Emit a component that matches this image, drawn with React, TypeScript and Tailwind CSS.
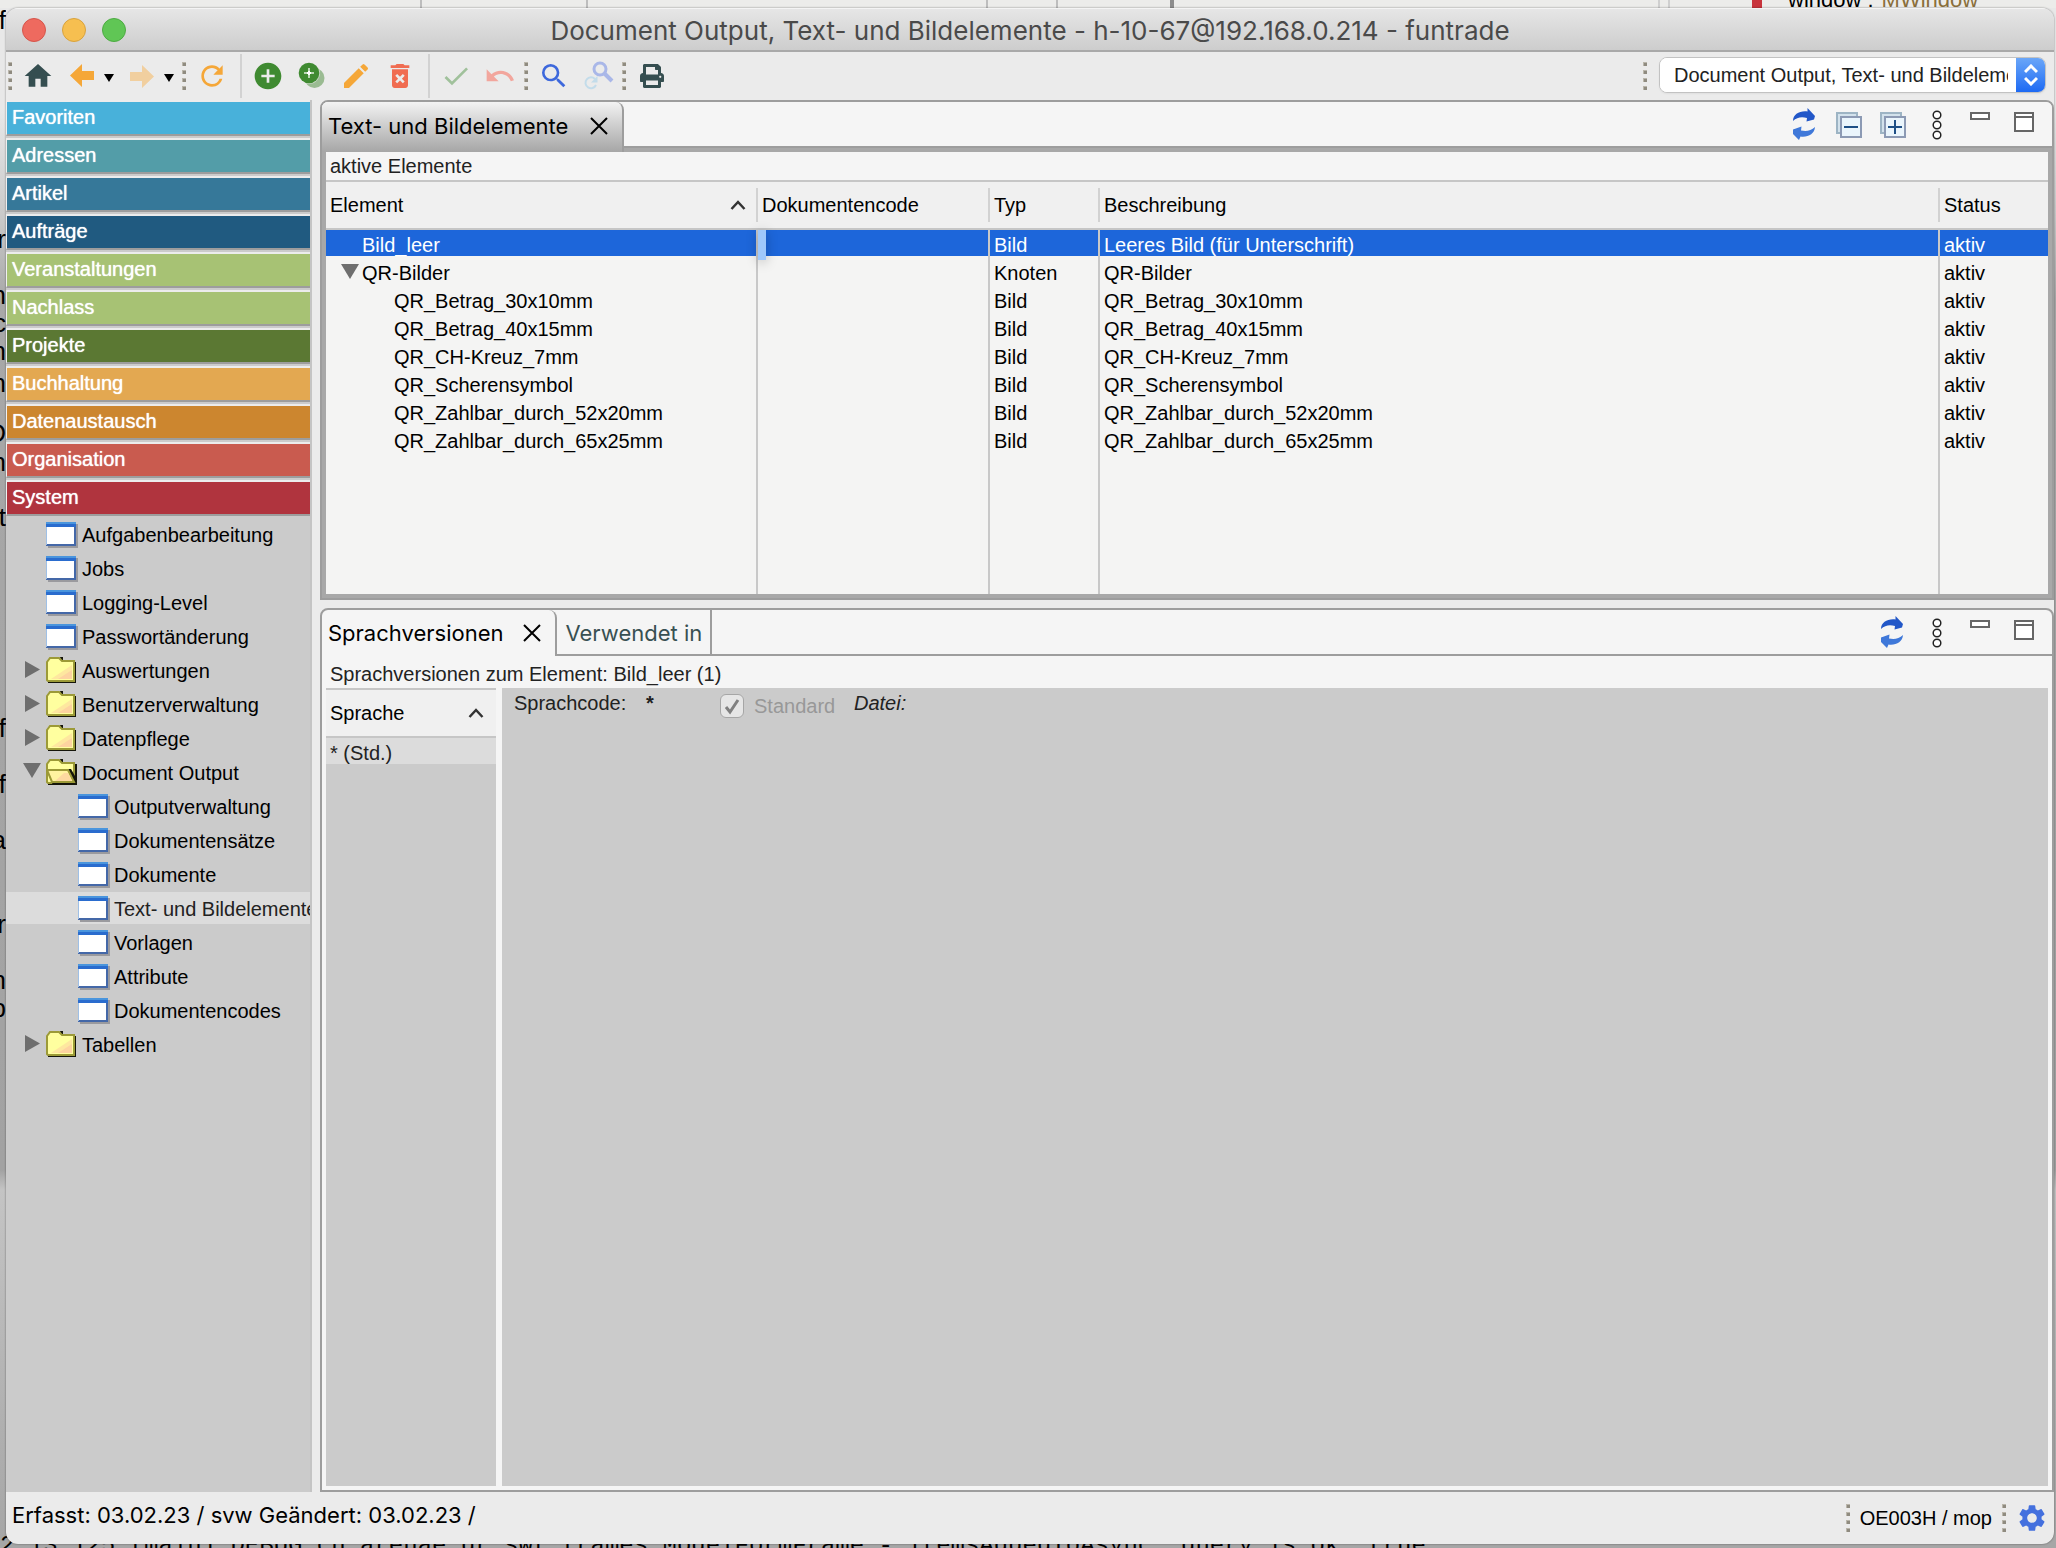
import React from 'react';
import {
  MdAddCircle,
  MdCheck,
  MdDeleteForever,
  MdEdit,
  MdHome,
  MdRefresh,
  MdSearch,
  MdSettings,
  MdUndo,
} from 'react-icons/md';
import { FaPrint } from 'react-icons/fa';

const navSections = [
  { label: 'Favoriten', color: 'bg-[#48b1da]' },
  { label: 'Adressen', color: 'bg-[#539da8]' },
  { label: 'Artikel', color: 'bg-[#367899]' },
  { label: 'Aufträge', color: 'bg-[#205a80]' },
  { label: 'Veranstaltungen', color: 'bg-[#a7c274]' },
  { label: 'Nachlass', color: 'bg-[#a7c274]' },
  { label: 'Projekte', color: 'bg-[#5b7833]' },
  { label: 'Buchhaltung', color: 'bg-[#e3a851]' },
  { label: 'Datenaustausch', color: 'bg-[#cc862f]' },
  { label: 'Organisation', color: 'bg-[#c95b4f]' },
  { label: 'System', color: 'bg-[#b0343e]' },
];

type TreeItem = {
  label: string;
  kind: 'window' | 'folder' | 'open';
  child?: boolean;
  selected?: boolean;
};

const treeItems: TreeItem[] = [
  { label: 'Aufgabenbearbeitung', kind: 'window' },
  { label: 'Jobs', kind: 'window' },
  { label: 'Logging-Level', kind: 'window' },
  { label: 'Passwortänderung', kind: 'window' },
  { label: 'Auswertungen', kind: 'folder' },
  { label: 'Benutzerverwaltung', kind: 'folder' },
  { label: 'Datenpflege', kind: 'folder' },
  { label: 'Document Output', kind: 'open' },
  { label: 'Outputverwaltung', kind: 'window', child: true },
  { label: 'Dokumentensätze', kind: 'window', child: true },
  { label: 'Dokumente', kind: 'window', child: true },
  { label: 'Text- und Bildelemente', kind: 'window', child: true, selected: true },
  { label: 'Vorlagen', kind: 'window', child: true },
  { label: 'Attribute', kind: 'window', child: true },
  { label: 'Dokumentencodes', kind: 'window', child: true },
  { label: 'Tabellen', kind: 'folder' },
];

const elements = [
  { name: 'Bild_leer', level: 0, type: 'Bild', text: 'Leeres Bild (für Unterschrift)' },
  { name: 'QR-Bilder', level: 0, type: 'Knoten', text: 'QR-Bilder', open: true },
  { name: 'QR_Betrag_30x10mm', level: 1, type: 'Bild', text: 'QR_Betrag_30x10mm' },
  { name: 'QR_Betrag_40x15mm', level: 1, type: 'Bild', text: 'QR_Betrag_40x15mm' },
  { name: 'QR_CH-Kreuz_7mm', level: 1, type: 'Bild', text: 'QR_CH-Kreuz_7mm' },
  { name: 'QR_Scherensymbol', level: 1, type: 'Bild', text: 'QR_Scherensymbol' },
  { name: 'QR_Zahlbar_durch_52x20mm', level: 1, type: 'Bild', text: 'QR_Zahlbar_durch_52x20mm' },
  { name: 'QR_Zahlbar_durch_65x25mm', level: 1, type: 'Bild', text: 'QR_Zahlbar_durch_65x25mm' },
];

// Bits of the windows behind this one that peek out at the left edge
const backdropBits = [
  { top: 6, text: 'f' },
  { top: 225, text: 'r' },
  { top: 281, text: 'n' },
  { top: 309, text: 'c' },
  { top: 337, text: 'n' },
  { top: 369, text: 'n' },
  { top: 419, text: 'D' },
  { top: 448, text: 'n' },
  { top: 503, text: 't' },
  { top: 714, text: 'f' },
  { top: 770, text: 'f' },
  { top: 826, text: 'a' },
  { top: 910, text: 'r' },
  { top: 966, text: 'n' },
  { top: 994, text: 'b' },
];

const Grip = () => (
  <svg width="4" height="28" className="shrink-0" aria-hidden="true">
    {[0, 8, 16, 24].map((y) => (
      <g key={y}>
        <rect y={y} width="4" height="4" fill="#b9b5aa" />
        <rect x="1" y={y + 1} width="3" height="3" fill="#8f8b80" />
      </g>
    ))}
  </svg>
);

const Divider = () => <div className="w-[2px] h-11 bg-[#d2d2d2] shrink-0"></div>;

const ToolButton = ({ label, children }: { label: string; children: React.ReactNode }) => (
  <button type="button" aria-label={label} className="w-8 h-8 shrink-0 flex items-center justify-center">
    {children}
  </button>
);

const Arrow = ({ label, color, flip = false }: { label: string; color: string; flip?: boolean }) => (
  <button type="button" aria-label={label} className="shrink-0">
    <svg width="24" height="24" viewBox="0 0 24 24" className={flip ? 'rotate-180' : ''}>
      <path d="M0 11.500L12 0V7H24V16H12V23Z" fill={color} />
    </svg>
  </button>
);

const Caret = ({ label }: { label: string }) => (
  <button type="button" aria-label={label} className="shrink-0">
    <svg width="10" height="8" viewBox="0 0 10 8" className="mt-[3px]">
      <path d="M0 0H10L5 8Z" fill="#000" />
    </svg>
  </button>
);

const AddCopyIcon = () => (
  <svg width="32" height="32" viewBox="0 0 32 32">
    <circle cx="18.500" cy="18" r="10" fill="#9abb92" />
    <circle cx="13" cy="13" r="11" fill="#ebebeb" opacity="0.600" />
    <circle cx="13" cy="13" r="10.300" fill="#3f8a31" />
    <path d="M13 8V18M8 13H18" stroke="#b9d6b4" strokeWidth="2" />
    <path d="M13 11V15M11 13H15" stroke="#fff" strokeWidth="2" />
  </svg>
);

const SearchResetIcon = () => (
  <svg width="32" height="32" viewBox="0 0 32 32" fill="none">
    <circle cx="18" cy="9" r="6" stroke="#a9b7e8" strokeWidth="3" />
    <path d="M22 13L30 21" stroke="#a9b7e8" strokeWidth="4" />
    <path d="M13 19A5.500 5.500 0 1 0 14 25" stroke="#c3dcea" strokeWidth="2" />
    <path d="M15.500 16V22.500H9Z" fill="#c3dcea" />
  </svg>
);

const SyncIcon = () => (
  <svg width="24" height="32" viewBox="0 0 24 32">
    <path d="M1 13C1 6 8 2.500 15.500 3.500V0L23 8L22 11.500L14.500 13.500L15 10C10 8.500 5 9 1 13Z" fill="#2257c8" />
    <path d="M23 19C22.500 26 16 29.500 8.500 28.500L7 32L1 26L1 21.500L9.500 18.500L9 22.500C14 23.500 19 23 23 19Z" fill="#3f78d9" />
  </svg>
);

const StackIcon = ({ plus = false }: { plus?: boolean }) => (
  <svg width="26" height="26" viewBox="0 0 26 26">
    <rect x="1" y="1" width="20" height="20" fill="#d3e2ec" stroke="#9db4c4" strokeWidth="2" />
    <rect x="5" y="5" width="20" height="20" fill="#eaf5fc" stroke="#8c9ab4" strokeWidth="2" />
    <path d="M8 15H22" stroke="#1d4f86" strokeWidth="2" />
    {plus && <path d="M15 8V22" stroke="#1d4f86" strokeWidth="2" />}
  </svg>
);

const DotsIcon = () => (
  <svg width="10" height="30" viewBox="0 0 10 30" fill="#fff" stroke="#222" strokeWidth="1.500">
    <circle cx="5" cy="5" r="3.800" />
    <circle cx="5" cy="15" r="3.800" />
    <circle cx="5" cy="25" r="3.800" />
  </svg>
);

const CloseIcon = () => (
  <svg width="18" height="18" viewBox="0 0 18 18" stroke="#000" strokeWidth="2">
    <path d="M1 1L17 17M17 1L1 17" />
  </svg>
);

const SortIcon = () => (
  <svg width="16" height="10" viewBox="0 0 16 10" fill="none" stroke="#333" strokeWidth="2.500">
    <path d="M1.500 9L8 2L14.500 9" />
  </svg>
);

const WindowIcon = () => (
  <svg width="32" height="26" viewBox="0 0 32 26" className="shrink-0 mt-[2px]">
    <rect x="2" y="2" width="30" height="24" fill="#9a9a9e" />
    <rect width="30" height="24" fill="#4468a8" />
    <rect width="30" height="2" fill="#4a95dd" />
    <rect y="2" width="30" height="3" fill="#2a6cce" />
    <rect y="5" width="1" height="18" fill="#9fc0e6" />
    <rect x="1" y="5" width="27" height="17" fill="#fff" />
  </svg>
);

const FolderIcon = ({ open = false }: { open?: boolean }) => (
  <svg width="32" height="26" viewBox="0 0 32 26" className="shrink-0">
    <path d="M2 26V24H28V5H30V26ZM14 0H17V3H15Z" fill="#15150a" />
    <path d="M1 23V5L4 1H13L16 4H28V24H2Z" fill="#ffff9f" stroke="#9c9a37" strokeWidth="2" />
    {open ? (
      <>
        <path d="M22 10L25 10L29 17V5H31V26H7L6 24H28Z" fill="#15150a" />
        <path d="M1 11H22L28 23H6Z" fill="#fff3a0" stroke="#9c9a37" strokeWidth="2" />
        <path d="M9 22L18 14L22 14L26 22Z" fill="#fdd9a0" />
      </>
    ) : (
      <>
        <path d="M5 22L26 8V22Z" fill="#fee79f" />
        <path d="M12 22L26 13V22Z" fill="#fdd3a0" />
      </>
    )}
  </svg>
);

const Triangle = ({ open = false }: { open?: boolean }) => (
  <svg width="18" height="18" viewBox="0 0 18 18" className="shrink-0">
    <path d={open ? 'M0 0H18L9 15Z' : 'M2 0L17 8.500L2 17Z'} fill="#6e6e6e" />
  </svg>
);

const MinMax = () => (
  <>
    <button type="button" aria-label="Minimieren" className="w-5 h-2 mt-1 ml-7 border-2 border-[#666] bg-white"></button>
    <button type="button" aria-label="Maximieren" className="flex items-start w-5 h-5 mt-1 ml-6 border-2 border-[#666] bg-white">
      <span className="w-full h-1 border-b-2 border-[#666]"></span>
    </button>
  </>
);

const TitleBar = () => (
  <header className="grid grid-cols-[1fr_auto_1fr] items-center h-11 px-4 border-t border-b-2 border-t-[#f4f4f4] border-b-[#a9a9a9] bg-linear-to-b from-[#e6e6e6] to-[#cdcdcd]">
    <div className="flex gap-4">
      <button type="button" aria-label="Schliessen" className="w-6 h-6 rounded-full bg-[#ee6a5f] border border-[#d5554b]"></button>
      <button type="button" aria-label="Ablegen" className="w-6 h-6 rounded-full bg-[#f6bf50] border border-[#d8a23d]"></button>
      <button type="button" aria-label="Zoomen" className="w-6 h-6 rounded-full bg-[#60c655] border border-[#4dab42]"></button>
    </div>
    <h1 className="pt-[2px] font-[Inter,sans-serif] text-[26px] leading-8 text-[#4a4a4a]">
      Document Output, Text- und Bildelemente - h-10-67@192.168.0.214 - funtrade
    </h1>
  </header>
);

const Toolbar = () => (
  <div className="flex items-center h-12 pl-[2px] pr-2">
    <div className="flex items-center gap-[10px]">
      <Grip />
      <ToolButton label="Start"><MdHome size={32} color="#354e50" /></ToolButton>
    </div>
    <div className="flex items-center gap-[10px] ml-4">
      <Arrow label="Zurück" color="#f5a738" />
      <Caret label="Verlauf zurück" />
    </div>
    <div className="flex items-center gap-[10px] ml-4">
      <Arrow label="Vorwärts" color="#f1cf9f" flip />
      <Caret label="Verlauf vorwärts" />
    </div>
    <div className="flex items-center gap-[10px] ml-2">
      <Grip />
      <ToolButton label="Aktualisieren"><MdRefresh size={32} color="#f5a738" /></ToolButton>
    </div>
    <div className="flex items-center gap-3 ml-3">
      <div className="flex items-center gap-[10px]">
        <Divider />
        <ToolButton label="Neu"><MdAddCircle size={32} color="#3f8a31" /></ToolButton>
      </div>
      <ToolButton label="Kopieren"><AddCopyIcon /></ToolButton>
      <ToolButton label="Bearbeiten"><MdEdit size={32} color="#f5a738" /></ToolButton>
      <ToolButton label="Löschen"><MdDeleteForever size={32} color="#f06c51" /></ToolButton>
      <div className="flex items-center gap-[10px]">
        <Divider />
        <ToolButton label="Speichern"><MdCheck size={32} color="#a0c19b" /></ToolButton>
      </div>
      <ToolButton label="Rückgängig"><MdUndo size={32} color="#f2a69d" /></ToolButton>
    </div>
    <div className="flex items-center gap-[10px] ml-2">
      <Grip />
      <ToolButton label="Suchen"><MdSearch size={32} color="#3d68dc" /></ToolButton>
    </div>
    <div className="flex items-center ml-3">
      <ToolButton label="Suche zurücksetzen"><SearchResetIcon /></ToolButton>
    </div>
    <div className="flex items-center gap-[10px] ml-2">
      <Grip />
      <ToolButton label="Drucken"><FaPrint size={24} color="#354e50" /></ToolButton>
    </div>

    <div className="flex items-center gap-3 ml-auto">
      <Grip />
      <div className="flex w-[387px] h-9 mb-[2px] rounded-lg overflow-hidden bg-white border border-[#c2c2c2] shadow-xs">
        <select aria-label="Fenster" className="appearance-none flex-1 min-w-0 pl-[14px] pr-2 text-[20px] text-[#222] bg-white">
          <option>Document Output, Text- und Bildelemente</option>
        </select>
        <div className="w-[29px] flex items-center justify-center bg-linear-to-b from-[#6aa6f8] to-[#1c69f3] pointer-events-none">
          <svg width="14" height="22" viewBox="0 0 14 22" fill="none" stroke="#fff" strokeWidth="3">
            <path d="M1 8L7 2L13 8M1 14L7 20L13 14" />
          </svg>
        </div>
      </div>
    </div>
  </div>
);

const Sidebar = () => (
  <aside className="w-[306px] shrink-0 bg-[#cbcbcb] border-r-2 border-[#c4c4c4] overflow-hidden">
    <nav className="-mr-[2px]">
      {navSections.map((section) => (
        <button
          key={section.label}
          type="button"
          className={`flex items-center w-full h-9 mb-[2px] pl-[5px] border-l border-t-2 border-r-2 border-b-2 border-l-[#f0f0f0] border-t-[#ececec] border-r-[#a3a3a3] border-b-[#9d9d9d] text-[20px] leading-6 text-white [text-shadow:0_0_1px_white] ${section.color}`}
        >
          <span className="pb-[2px]">{section.label}</span>
        </button>
      ))}
    </nav>
    <ul>
      {treeItems.map((item) => (
        <li key={item.label} className="pb-[2px]">
          <a
            href="#"
            className={`flex items-center h-8 whitespace-nowrap text-[20px] leading-8 ${item.child ? 'pl-[72px]' : item.kind === 'window' ? 'pl-10' : 'pl-[17px] gap-[5px]'} ${item.selected ? 'bg-[#dcdcdc] text-[#222]' : 'text-black'}`}
          >
            {item.kind !== 'window' && <Triangle open={item.kind === 'open'} />}
            <span className="flex items-center gap-1">
              {item.kind === 'window' ? <WindowIcon /> : <FolderIcon open={item.kind === 'open'} />}
              <span className="pt-[2px]">{item.label}</span>
            </span>
          </a>
        </li>
      ))}
    </ul>
  </aside>
);

const headCell = 'h-[46px] p-0 box-content border-y-2 border-[#c6c6c6] font-normal text-left';
const headInner = 'flex items-center justify-between h-[34px] pl-1 pr-[10px] border-r-2 border-[#d2d2d2]';
const bodyCell = 'p-0 border-r-2 border-[#c8c8c8]';

const ElementTable = () => (
  <table className="w-full table-fixed border-separate border-spacing-0 text-[20px] leading-7 bg-[#f4f4f3]">
    <colgroup>
      <col className="w-[432px]" />
      <col className="w-[232px]" />
      <col className="w-[110px]" />
      <col />
      <col className="w-[108px]" />
    </colgroup>
    <thead className="bg-[#f0f0f0]">
      <tr>
        <th className={headCell}><div className={headInner}>Element <SortIcon /></div></th>
        <th className={headCell}><div className={headInner}>Dokumentencode</div></th>
        <th className={headCell}><div className={headInner}>Typ</div></th>
        <th className={headCell}><div className={headInner}>Beschreibung</div></th>
        <th className={headCell}><div className="pl-1">Status</div></th>
      </tr>
    </thead>
    <tbody>
      {elements.map((row, index) => {
        const selected = index === 0;
        const line = `flex items-center h-[26px] mb-[2px] pl-1 pt-1 ${selected ? 'bg-[#1d66da] text-white' : 'text-black'}`;
        return (
          <tr key={row.name}>
            <td className={bodyCell}>
              <div className={`${line} ${row.level === 1 ? 'pl-[68px]' : row.open ? 'pl-[15px] gap-[3px]' : 'pl-9'}`}>
                {row.open && <Triangle open />}
                {row.name}
              </div>
            </td>
            <td className={`${bodyCell} relative`}>
              <div className={line}></div>
              {selected && <div className="absolute left-0 top-0 w-2 h-[30px] bg-[#9fc8fb] shadow-[0_2px_12px_rgb(0,0,0,0.25)]"></div>}
            </td>
            <td className={bodyCell}><div className={line}>{row.type}</div></td>
            <td className={bodyCell}><div className={line}>{row.text}</div></td>
            <td className="p-0"><div className={line}>aktiv</div></td>
          </tr>
        );
      })}
      <tr aria-hidden="true" className="h-[140px]">
        <td className={bodyCell}></td>
        <td className={bodyCell}></td>
        <td className={bodyCell}></td>
        <td className={bodyCell}></td>
        <td></td>
      </tr>
    </tbody>
  </table>
);

const ElementsPane = () => (
  <section className="border-2 border-[#9d9d9d] rounded-t-lg bg-[#f5f5f5] overflow-hidden">
    <div className="flex h-[50px] bg-[linear-gradient(#f5f5f5_44px,#9d9d9d_44px,#9d9d9d_46px,#a8a8a8_46px)]">
      <div className="flex items-center gap-[22px] pl-[6px] pr-[14px] pb-[2px] border-r-2 border-[#9d9d9d] rounded-tr-lg bg-linear-to-b from-[#f3f3f3] to-[#a6a6a6] font-[Inter,sans-serif] text-[22px]">
        <span>Text- und Bildelemente</span>
        <button type="button" aria-label="Text- und Bildelemente schliessen"><CloseIcon /></button>
      </div>
      <div className="flex items-start ml-auto pt-[6px] pr-[18px]">
        <button type="button" aria-label="Aktualisieren"><SyncIcon /></button>
        <button type="button" aria-label="Alle zuklappen" className="ml-5 mt-1"><StackIcon /></button>
        <button type="button" aria-label="Alle aufklappen" className="ml-[18px] mt-1"><StackIcon plus /></button>
        <button type="button" aria-label="Menü" className="ml-[26px] mt-[2px]"><DotsIcon /></button>
        <MinMax />
      </div>
    </div>
    <div className="border-4 border-t-0 border-[#a8a8a8]">
      <p className="h-7 pl-1 text-[20px] leading-7 text-[#222]">aktive Elemente</p>
      <ElementTable />
    </div>
  </section>
);

const LanguagePane = () => (
  <section className="flex flex-col flex-1 border-2 border-[#9d9d9d] rounded-t-lg bg-[#f5f5f5] overflow-hidden">
    <div className="flex h-[46px] font-[Inter,sans-serif] text-[22px]">
      <div className="flex items-center gap-5 pl-[6px] pr-[14px] border-r-2 border-[#9d9d9d] rounded-tr-lg">
        <span>Sprachversionen</span>
        <button type="button" aria-label="Sprachversionen schliessen"><CloseIcon /></button>
      </div>
      <button type="button" className="px-2 pt-[2px] border-r-2 border-b-2 border-[#9d9d9d] text-[#385052]">Verwendet in</button>
      <div className="flex flex-1 items-start justify-end pt-[6px] pr-[18px] border-b-2 border-[#9d9d9d]">
        <button type="button" aria-label="Aktualisieren"><SyncIcon /></button>
        <button type="button" aria-label="Menü" className="ml-[28px] mt-[2px]"><DotsIcon /></button>
        <MinMax />
      </div>
    </div>
    <div className="flex flex-col flex-1 px-1 pb-1 text-[20px]">
      <p className="h-8 pl-1 pt-[2px] leading-8 text-[#222]">Sprachversionen zum Element: Bild_leer (1)</p>
      <div className="flex flex-1 gap-[6px]">
        <div className="w-[170px] shrink-0 bg-[#cbcbcb]">
          <table className="w-full border-separate border-spacing-0">
            <thead>
              <tr>
                <th className="h-[50px] p-0 font-normal border-y-2 border-[#c6c6c6] bg-[#f0f0f0]">
                  <div className="flex items-center justify-between pl-1 pr-3">Sprache <SortIcon /></div>
                </th>
              </tr>
            </thead>
            <tbody>
              <tr>
                <td className="h-[26px] p-0 pl-1 pt-1 leading-[22px] bg-[#dcdcdc] text-[#222]">* (Std.)</td>
              </tr>
            </tbody>
          </table>
        </div>
        <form className="flex flex-1 items-start pl-3 pt-[3px] leading-6 bg-[#cbcbcb] text-[#222]">
          <span className="w-[132px]">Sprachcode:</span>
          <b className="w-[74px]">*</b>
          <label className="flex items-center gap-[10px] pt-[3px] w-[134px] text-[#989898]">
            <span className="grid">
              <input
                type="checkbox"
                defaultChecked
                disabled
                className="appearance-none col-start-1 row-start-1 w-6 h-6 rounded-md border border-[#a6a6a6] bg-[#e6e6e6]"
              />
              <svg width="24" height="24" viewBox="0 0 24 24" fill="none" className="col-start-1 row-start-1">
                <path d="M6 13L10 18L18 6" stroke="#808080" strokeWidth="3" />
              </svg>
            </span>
            Standard
          </label>
          <i>Datei:</i>
        </form>
      </div>
    </div>
  </section>
);

const StatusBar = () => (
  <footer className="flex items-center h-[52px] px-[6px]">
    <span className="pb-[6px] font-[Inter,sans-serif] text-[22px]">Erfasst: 03.02.23 / svw Geändert: 03.02.23 /</span>
    <div className="flex items-center gap-[10px] ml-auto">
      <Grip />
      <span className="text-[20px]">OE003H / mop</span>
      <Grip />
      <ToolButton label="Einstellungen"><MdSettings size={32} color="#4470de" /></ToolButton>
    </div>
  </footer>
);

const Backdrop = () => (
  <div aria-hidden="true" className="absolute inset-0 overflow-hidden bg-[linear-gradient(#e8e8e8_110px,#c8c8c8_220px,#a8a8a8_300px,#a2a2a2_1170px,#c4c4c4_1190px,#a6a6a6_1540px)] text-[26px] leading-7 text-black">
    <div className="flex h-2 bg-[#ececea]">
      <span className="w-[422px] border-r-2 border-[#bdbdbd]"></span>
      <span className="w-[166px] border-r-2 border-[#bdbdbd]"></span>
      <span className="w-[400px] border-r-2 border-[#bdbdbd]"></span>
      <span className="w-[70px] border-r-2 border-[#bdbdbd]"></span>
      <span className="w-[116px] border-r-4 border-[#8d8d8d]"></span>
      <span className="w-[486px] border-r-2 border-[#cfcfcf]"></span>
      <span className="w-[10px] border-r-2 border-[#cfcfcf]"></span>
    </div>
    {backdropBits.map((bit) => (
      <div key={bit.top} className="absolute left-0 w-[6px] overflow-hidden" style={{ top: bit.top }}>
        <span className="float-right">{bit.text}</span>
      </div>
    ))}
    <div className="absolute -top-3 left-[1788px] flex gap-2 text-[22px] leading-6">
      window : <span className="text-[#8a6f3b]">MWindow</span>
    </div>
    <span className="absolute top-0 left-[1752px] w-[10px] h-2 bg-[#c8343c]"></span>
    <div className="absolute -bottom-[10px] left-0 whitespace-nowrap font-['Liberation_Mono',monospace] text-[24px] leading-6">
      2.13.125 [main] DEBUG ch.arenae.dr.swt.frames.ModelFormFrame - itemsAddedToAsync: query is ok, true
    </div>
  </div>
);

const App: React.FC = () => (
  <div className="relative flex min-h-screen pt-2 pb-1 pl-[6px] pr-[2px] overflow-hidden font-['Liberation_Sans',sans-serif] text-black">
    <Backdrop />
    <div className="relative flex flex-col flex-1 min-w-0 rounded-xl overflow-hidden bg-[#ebebeb] shadow-[0_0_2px_rgb(0,0,0,0.5)]">
      <TitleBar />
      <Toolbar />
      <main className="flex flex-1">
        <Sidebar />
        <div className="flex flex-col flex-1 gap-2 min-w-0 pl-2">
          <ElementsPane />
          <LanguagePane />
        </div>
      </main>
      <StatusBar />
    </div>
  </div>
);

export default App;
